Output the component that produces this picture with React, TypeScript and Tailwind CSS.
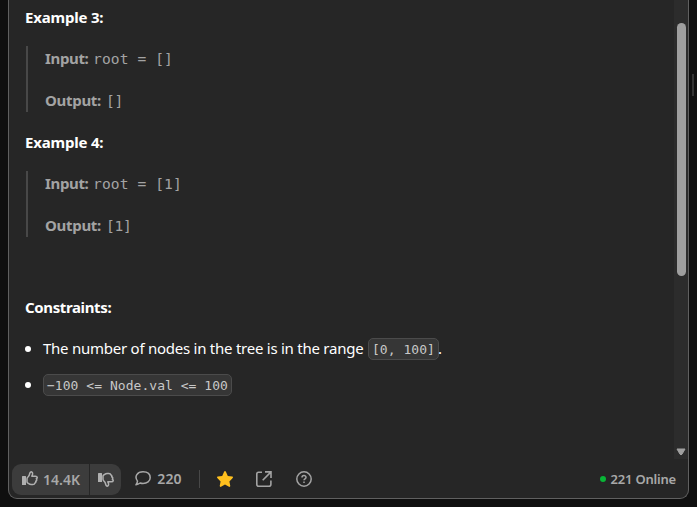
import React from "react";

const bodyFont = "font-['Segoe_UI','Noto_Sans',sans-serif]";
const monoFont = "font-['DejaVu_Sans_Mono',monospace]";

function Example({ n, value, output }: { n: number; value: string; output: string }) {
  return (
    <section className="h-[125px]">
      <h3 className="-ml-px h-6 text-[15px] leading-6 font-bold tracking-[-0.2px] text-white">Example {n}:</h3>
      <div className="mt-[17px] flex h-[66px] flex-col justify-between border-l-2 border-[#484848] pl-[17px] text-[#a3a3a3]">
        <p className="flex h-6 items-center">
          <b className="w-12 text-[15px] tracking-[-0.35px]">Input:</b>
          <span className={`pt-0.5 text-[14.6px] tracking-[0.1px] whitespace-pre ${monoFont}`}>{value}</span>
        </p>
        <p className="flex h-6 items-center">
          <b className="w-[62px] text-[15px] tracking-[-0.3px]">Output:</b>
          <span className={`-ml-px pt-0.5 text-[14.6px] tracking-[-0.3px] whitespace-pre ${monoFont}`}>{output}</span>
        </p>
      </div>
    </section>
  );
}

function Code({ children }: { children: React.ReactNode }) {
  return (
    <code className={`flex h-[22px] items-center rounded-[5px] border border-[#4b4b4b] bg-[#363636] px-[3px] pt-0.5 text-[13px] tracking-[0.04px] whitespace-pre text-[#c8c8c8] ${monoFont}`}>
      {children}
    </code>
  );
}

function Thumb({ className = "" }: { className?: string }) {
  return (
    <svg className={className} width="16" height="15" viewBox="0 0 16 15" fill="none" stroke="#b0b0b0" strokeWidth="1.5" strokeLinejoin="round">
      <path d="M.5 5h3q.5 0 .5.5v8q0 .5-.5.5h-3q-.5 0-.5-.5v-8Q0 5 .5 5Z" fill="#b0b0b0" stroke="none" />
      <path d="M5 10.8V7.8C5 6.7 5.7 6.2 6.4 5.5C7.4 4.4 7.5 3.4 7.8 2.2C8.1.9 9.3.5 10.1 1.3C11 2.2 10.5 3.9 9.8 5.2H13.5C15.5 5.2 15.7 7.2 14.3 7.8C15.1 8.6 14.7 9.9 13.7 10.2C14.1 11.1 13.6 12 12.7 12.2C12.6 13.2 11.8 13.6 10.9 13.6H9.2C7.5 13.6 6.8 12.7 5.8 12C5.3 11.7 5 11.4 5 10.8Z" />
    </svg>
  );
}

export default function App() {
  return (
    <div className={`h-[507px] w-[697px] overflow-hidden bg-[#0f0f0f] pl-2 ${bodyFont}`}>
      <div className="flex">
        <main className="flex h-[499px] w-[681px] flex-col rounded-b-[9px] border border-t-0 border-[#606060] bg-[#262626]">
          <div className="flex h-[459px]">
            <div className="w-[665px] pt-[5px] pl-[17px]">
              <Example n={3} value="root = []" output="[]" />
              <Example n={4} value="root = [1]" output="[1]" />
              <h3 className="mt-10 -ml-px h-6 text-[15px] leading-6 font-bold tracking-[-0.37px] text-white">Constraints:</h3>
              <ul className="mt-[19px] text-[15px] text-white">
                <li className="flex h-[22px] items-center">
                  <i className="mr-3 -ml-px size-[6px] rounded-full bg-white" />
                  <span className="w-[325px] pb-0.5 tracking-[-0.25px] whitespace-nowrap">The number of nodes in the tree is in the range</span>
                  <Code>[0, 100]</Code>
                  <span className="-ml-px pb-0.5">.</span>
                </li>
                <li className="mt-[14px] flex h-[22px] items-center">
                  <i className="mr-3 -ml-px size-[6px] rounded-full bg-white" />
                  <Code>−100 &lt;= Node.val &lt;= 100</Code>
                </li>
              </ul>
            </div>
            <div className="flex w-[14px] flex-col items-center bg-[#2c2c2c] pt-[23px]">
              <div className="h-[253px] w-[9px] rounded-full bg-[#9f9f9f]" />
              <svg className="mt-[172px]" width="10" height="8" viewBox="0 0 10 8">
                <path d="M1 1h8L6 6.2Q5 7.5 4 6.2Z" fill="#a0a0a0" stroke="#a0a0a0" strokeLinejoin="round" />
              </svg>
            </div>
          </div>
          <footer className="flex h-[39px] items-center pr-3 pl-[3px] text-[#a8a8a8]">
            <div className="mt-0.5 flex h-[31px] gap-px overflow-hidden rounded-[9px]">
              <button className="flex w-[77px] items-center bg-[#3c3c3c] pl-[10px] text-sm font-semibold">
                <Thumb className="mb-0.5" />
                <span className="ml-[5px]">14.4K</span>
              </button>
              <button className="flex w-[31px] items-center bg-[#3c3c3c] pb-px pl-2">
                <Thumb className="-scale-y-100" />
              </button>
            </div>
            <button className="ml-[14px] flex items-center text-sm font-semibold">
              <svg width="16" height="15" viewBox="0 0 16 15" fill="none" stroke="#a8a8a8" strokeWidth="1.5" strokeLinejoin="round">
                <path d="M2.5 10.1C-1.1 5.2 2.5.8 8 .8S15.2 3.5 15.2 6.8 12 12.5 8 12.5C6.9 12.5 6 12.3 5.1 12C3.8 13 2.5 13.6 1 13.8C1.9 12.7 2.3 11.5 2.5 10.1Z" />
              </svg>
              <span className="ml-[5px] w-[27px] pt-px tracking-[0.2px]">220</span>
            </button>
            <div className="ml-4 h-[18px] w-px bg-[#484848]" />
            <svg className="ml-[17px]" width="16" height="16" viewBox="0 0 16 16" fill="#ffc01e">
              <path d="M7.2.5q.8-1 1.6 0l2 4.5 4.5.6q1.1.5.4 1.5l-3.3 3.3.9 4.7q-.2 1.1-1.3.7L8 13.5l-4 2.3q-1.1.4-1.3-.7l.9-4.7L.3 7.1q-.7-1 .4-1.5L5.2 5Z" />
            </svg>
            <svg className="ml-[23px]" width="16" height="16" viewBox="0 0 16 16" fill="none" stroke="#a3a3a3" strokeWidth="1.6">
              <path d="M6 1.2H2.5Q.8 1.2.8 3v10.2Q.8 15.2 2.7 15.2H13q1.9 0 1.9-2v-3.7M9 .9h6v6M15 .9 6.7 9.2" />
            </svg>
            <svg className="ml-6" width="16" height="16" viewBox="0 0 16 16" fill="none" stroke="#a3a3a3" strokeWidth="1.5">
              <circle cx="8" cy="8" r="7.2" />
              <path d="M6 6.5C6 3.9 10 3.9 10 6.4C10 7.8 8 7.8 8 9.3M8 10.5v1.5" />
            </svg>
            <div className="ml-auto flex items-center text-[13px] font-semibold">
              <i className="mr-[5px] size-[6px] rounded-full bg-[#08b536]" />
              <span className="pt-0.5 tracking-[-0.2px]">221 Online</span>
            </div>
          </footer>
        </main>
        <div className="mt-[74px] ml-[3px] h-[22px] w-[2px] bg-[#333]" />
      </div>
    </div>
  );
}
